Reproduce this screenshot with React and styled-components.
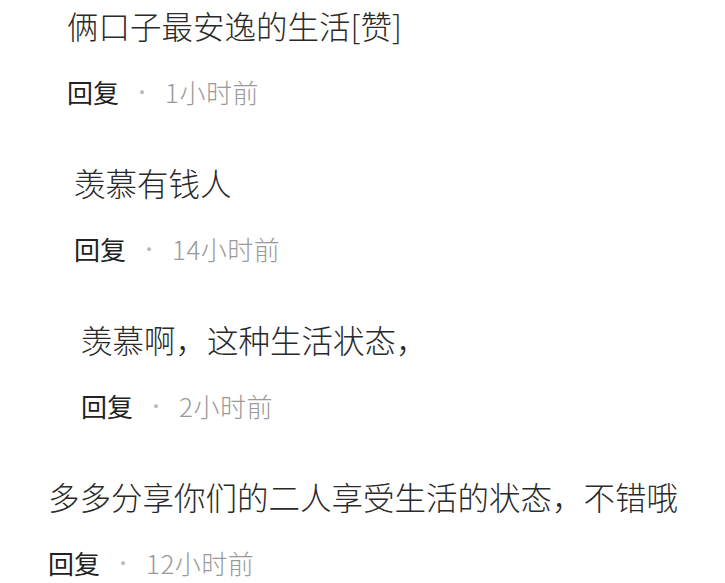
import React from 'react';
import styled, { createGlobalStyle } from 'styled-components';

const GlobalStyle = createGlobalStyle`
  html, body {
    margin: 0;
    padding: 0;
    background: #ffffff;
  }
  body {
    font-family: "Noto Sans CJK SC", "Noto Sans", sans-serif;
  }
`;

const List = styled.div`
  display: flex;
  flex-direction: column;
  gap: 53px;
  padding-top: 5px;
  width: 725px;
  height: 583px;
  box-sizing: border-box;
  overflow: hidden;
`;

const Comment = styled.div`
  display: flex;
  flex-direction: column;
  gap: 30px;
  padding-left: ${p => p.indent}px;
`;

const Content = styled.div`
  font-size: 31.5px;
  font-weight: 300;
  line-height: 40px;
  color: #2a2a2a;
  white-space: nowrap;
`;

const Meta = styled.div`
  display: flex;
  align-items: center;
  font-size: 26px;
  font-weight: 300;
  line-height: 34px;
  white-space: nowrap;
`;

const Reply = styled.span`
  color: #222222;
  font-weight: 400;
`;

const Dot = styled.span`
  display: inline-block;
  width: 46px;
  text-align: center;
  font-size: 20px;
  color: #b8b8b8;
`;

const Time = styled.span`
  color: #9a9a9a;
  letter-spacing: 0.5px;
`;

const comments = [
  { text: '俩口子最安逸的生活[赞]', time: '1小时前', indent: 67 },
  { text: '羡慕有钱人', time: '14小时前', indent: 74 },
  { text: '羡慕啊，这种生活状态，', time: '2小时前', indent: 81 },
  { text: '多多分享你们的二人享受生活的状态，不错哦', time: '12小时前', indent: 48 },
];

export default function App() {
  return (
    <>
      <GlobalStyle />
      <List>
        {comments.map((c, i) => (
          <Comment key={i} indent={c.indent}>
            <Content>{c.text}</Content>
            <Meta>
              <Reply>回复</Reply>
              <Dot>·</Dot>
              <Time>{c.time}</Time>
            </Meta>
          </Comment>
        ))}
      </List>
    </>
  );
}
